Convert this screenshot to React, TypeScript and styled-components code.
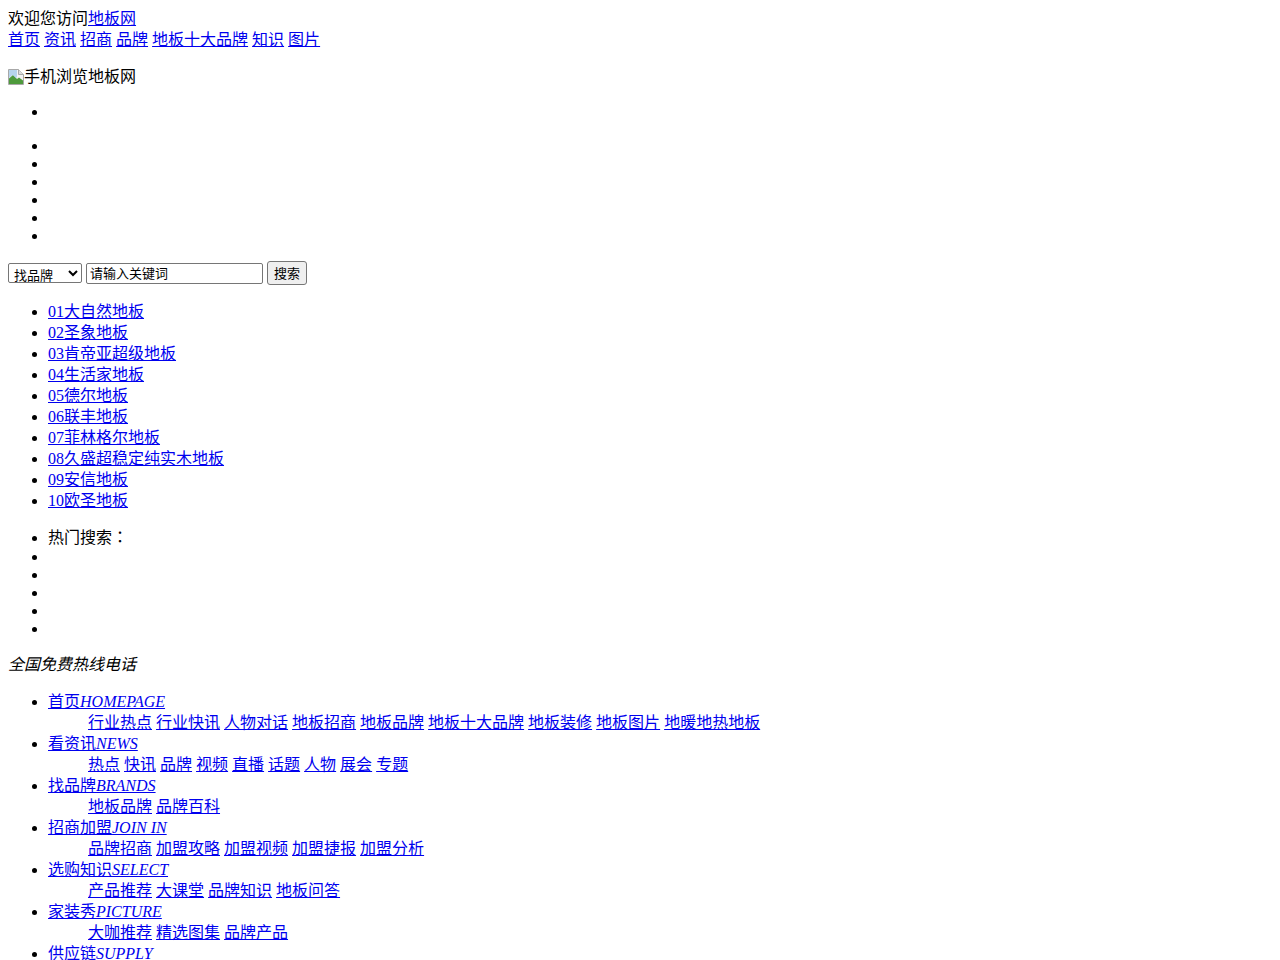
import styled, { createGlobalStyle } from 'styled-components'

const GlobalStyle = createGlobalStyle`
  body {
    margin: 8px;
    background: #fff;
    color: #000;
    font-family: "Liberation Serif", "Noto Sans CJK SC", serif;
    font-size: 16px;
    line-height: 21px;
  }
`

const Link = styled.a`
  color: #0000ee;
  text-decoration: underline;
  cursor: pointer;
`

const TopBar = styled.div``

const TopNav = styled.div``

const MobileTip = styled.p`
  margin: 16px 0;
  display: flex;
  align-items: center;
  height: 21px;
`

const BrokenImage = styled.svg`
  width: 16px;
  height: 16px;
  flex: none;
`

const DotList = styled.ul`
  margin: 16px 0;
  padding-left: 40px;
  list-style: disc;
`

const EmptyItem = styled.li`
  height: 18px;
  line-height: 18px;
`

const TextItem = styled.li`
  height: 21px;
`

const SearchForm = styled.form`
  display: flex;
  align-items: center;
  gap: 4px;
  margin: 0;
  height: 24px;
`

const TypeSelect = styled.select`
  box-sizing: border-box;
  width: 74px;
  height: 20px;
  font-family: "Noto Sans CJK SC", sans-serif;
  font-size: 13px;
  line-height: 18px;
  border: 1px solid #767676;
  border-radius: 2px;
  padding: 0 1px;
  background: #fff;
  color: #000;
`

const KeywordInput = styled.input`
  box-sizing: border-box;
  width: 177px;
  height: 21px;
  padding: 0 3px 1px;
  font-family: "Noto Sans CJK SC", sans-serif;
  font-size: 13px;
  line-height: 16px;
  border: 1px solid #767676;
  border-radius: 2px;
  color: #000;
`

const SearchButton = styled.button`
  box-sizing: border-box;
  height: 24px;
  padding: 0 6px;
  font-family: "Noto Sans CJK SC", sans-serif;
  font-size: 13px;
  line-height: 16px;
  background: #efefef;
  border: 1px solid #767676;
  border-radius: 3px;
  color: #000;
`

const FullColon = styled.span`
  font-family: "Noto Sans CJK TC", sans-serif;
  line-height: 16px;
`

const Hotline = styled.em`
  display: block;
  margin: 0;
`

const MenuSub = styled.div`
  margin-left: 40px;
`

const MenuEn = styled.i``

const topNav = ['首页', '资讯', '招商', '品牌', '地板十大品牌', '知识', '图片']

const ranking = [
  '大自然地板',
  '圣象地板',
  '肯帝亚超级地板',
  '生活家地板',
  '德尔地板',
  '联丰地板',
  '菲林格尔地板',
  '久盛超稳定纯实木地板',
  '安信地板',
  '欧圣地板',
]

const menu = [
  {
    cn: '首页',
    en: 'HOMEPAGE',
    subs: ['行业热点', '行业快讯', '人物对话', '地板招商', '地板品牌', '地板十大品牌', '地板装修', '地板图片', '地暖地热地板'],
  },
  { cn: '看资讯', en: 'NEWS', subs: ['热点', '快讯', '品牌', '视频', '直播', '话题', '人物', '展会', '专题'] },
  { cn: '找品牌', en: 'BRANDS', subs: ['地板品牌', '品牌百科'] },
  { cn: '招商加盟', en: 'JOIN IN', subs: ['品牌招商', '加盟攻略', '加盟视频', '加盟捷报', '加盟分析'] },
  { cn: '选购知识', en: 'SELECT', subs: ['产品推荐', '大课堂', '品牌知识', '地板问答'] },
  { cn: '家装秀', en: 'PICTURE', subs: ['大咖推荐', '精选图集', '品牌产品'] },
  { cn: '供应链', en: 'SUPPLY', subs: [] as string[] },
]

const withSpaces = (items: React.ReactNode[]) =>
  items.flatMap((item, i) => (i === 0 ? [item] : [' ', item]))

export default function App() {
  return (
    <>
      <GlobalStyle />
      <TopBar>
        欢迎您访问<Link>地板网</Link>
      </TopBar>
      <TopNav>{withSpaces(topNav.map((t) => <Link key={t}>{t}</Link>))}</TopNav>

      <MobileTip>
        {/* broken image placeholder */}
        <BrokenImage viewBox="0 0 16 16">
          <path d="M0.5 0.5h10l5 5v10h-15z" fill="#f2f2f2" stroke="#a8a8a8" />
          <path d="M1 15V9.5l4-3.5 4 4 2-1.5 4 3V15z" fill="#4e9a3c" />
          <path d="M1 9l3.5-3 3.5 3 1 -1V1H1z" fill="#9cc7ea" opacity="0.7" />
          <path d="M10.5 0.5v5h5" fill="#dcdcdc" stroke="#a8a8a8" />
        </BrokenImage>
        手机浏览地板网
      </MobileTip>

      <DotList>
        <EmptyItem />
      </DotList>
      <DotList>
        {[0, 1, 2, 3, 4, 5].map((i) => (
          <EmptyItem key={i} />
        ))}
      </DotList>

      <SearchForm onSubmit={(e) => e.preventDefault()}>
        <TypeSelect defaultValue="brand">
          <option value="brand">找品牌</option>
          <option value="news">找资讯</option>
        </TypeSelect>
        <KeywordInput defaultValue="请输入关键词" />
        <SearchButton type="submit">搜索</SearchButton>
      </SearchForm>

      <DotList>
        {ranking.map((name, i) => (
          <li key={name}>
            <Link>
              {String(i + 1).padStart(2, '0')}
              {name}
            </Link>
          </li>
        ))}
      </DotList>

      <DotList>
        <TextItem>
          热门搜索<FullColon>：</FullColon>
        </TextItem>
        {[0, 1, 2, 3, 4].map((i) => (
          <EmptyItem key={i} />
        ))}
      </DotList>

      <Hotline>全国免费热线电话</Hotline>

      <DotList>
        {menu.map((m) => (
          <li key={m.cn}>
            <Link>
              {m.cn}
              <MenuEn>{m.en}</MenuEn>
            </Link>
            {m.subs.length > 0 && (
              <MenuSub>{withSpaces(m.subs.map((s) => <Link key={s}>{s}</Link>))}</MenuSub>
            )}
          </li>
        ))}
      </DotList>
    </>
  )
}
